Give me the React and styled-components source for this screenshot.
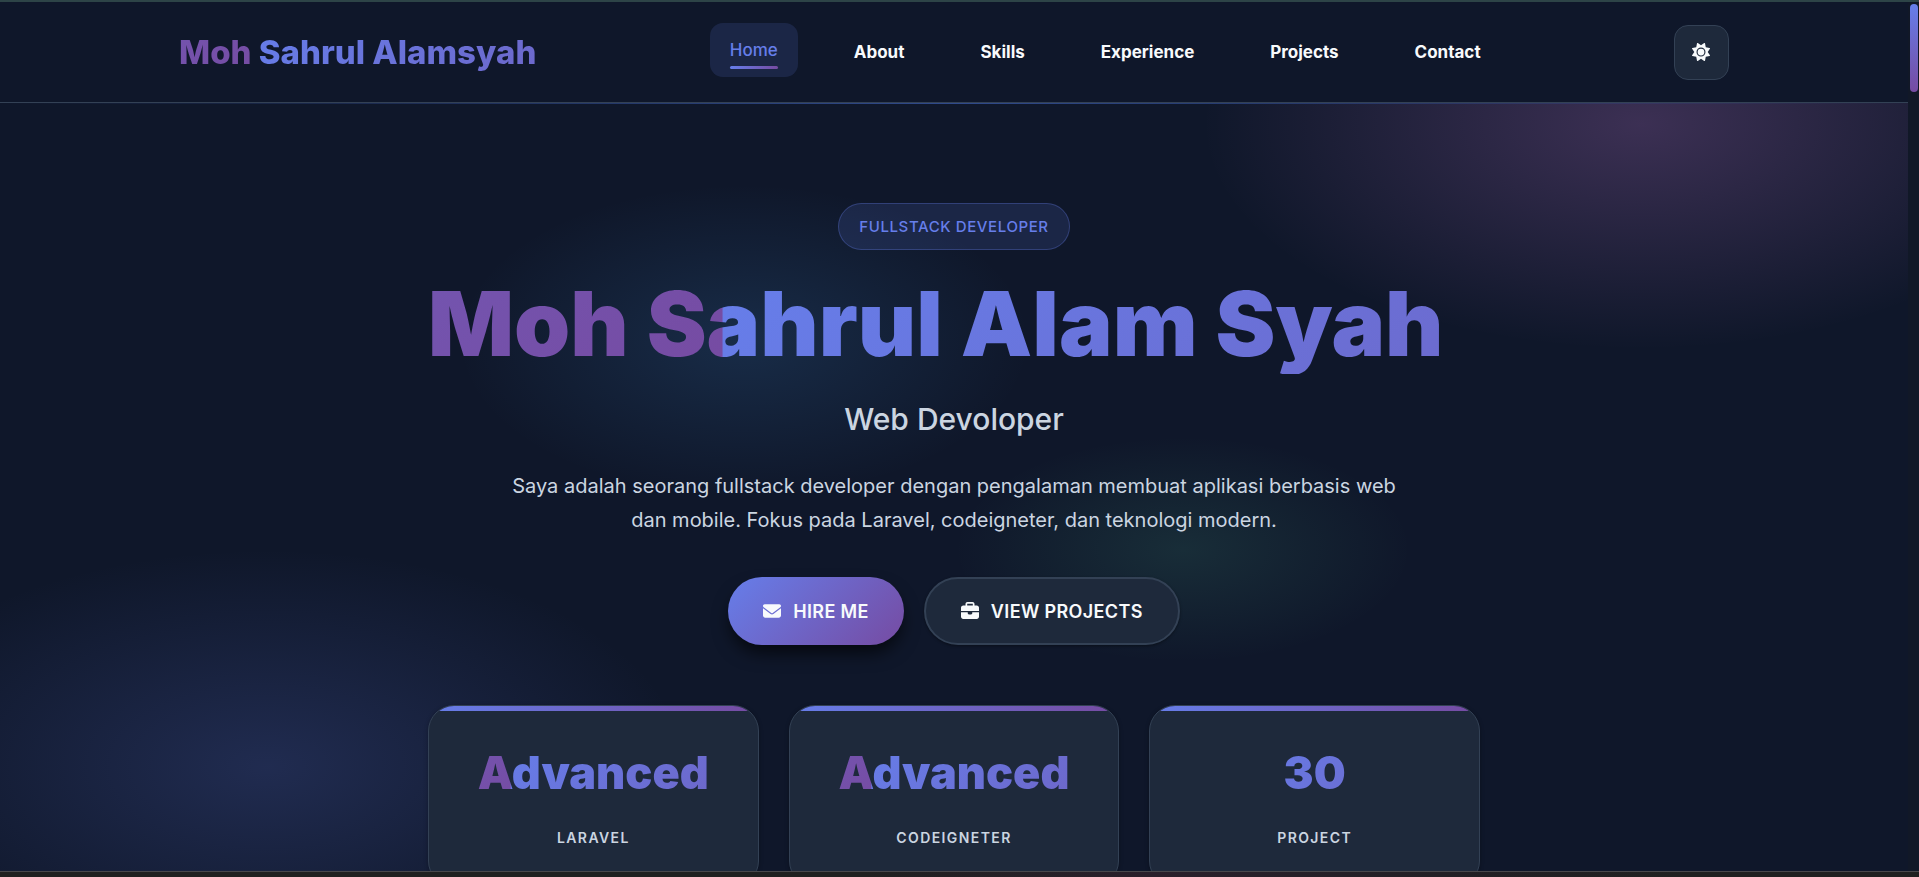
import React from "react";
import styled, { createGlobalStyle } from "styled-components";
import { FaEnvelope, FaBriefcase, FaSun } from "react-icons/fa6";

const ink = "#0f172a";
const panel = "#1e293b";
const line = "#334155";
const blue = "#667eea";
const violet = "#764ba2";
const brandGradient = `linear-gradient(135deg, ${blue} 0%, ${violet} 100%)`;

const GlobalStyle = createGlobalStyle`
  *, *::before, *::after { box-sizing: border-box; }
  body {
    margin: 0;
    background: ${ink};
    color: #f8fafc;
    font-family: Inter, "Liberation Sans", sans-serif;
    -webkit-font-smoothing: antialiased;
  }
`;

const Screen = styled.div`
  display: flex;
  flex-direction: column;
  height: 100vh;
  overflow: hidden;
`;

const TopEdge = styled.div`
  flex: none;
  height: 2px;
  background: #2d4447;
`;

const Taskbar = styled.div`
  flex: none;
  height: 6px;
  border-top: 1px solid #48474b;
  background: linear-gradient(90deg, #202020 0%, #202020 45%, #2a1f2b 60%, #221f25 75%, #202020 88%);
`;

const Viewport = styled.div`
  flex: 1;
  min-height: 0;
  display: flex;
  overflow: hidden;
`;

const Page = styled.div`
  flex: 1;
  min-width: 0;
  overflow: hidden;
  background:
    radial-gradient(ellipse 23% 26% at 86% 14%, rgba(240, 147, 251, 0.2), transparent),
    radial-gradient(ellipse 22% 25% at 14% 88%, rgba(102, 126, 234, 0.2), transparent),
    radial-gradient(ellipse 15% 18% at 39% 39%, rgba(79, 172, 254, 0.14), transparent),
    radial-gradient(ellipse 12% 13% at 62% 63%, rgba(105, 240, 180, 0.1), transparent),
    ${ink};
`;

const ScrollTrack = styled.div`
  flex: none;
  width: 11px;
  padding: 2px 1px 2px 2px;
  background: #111827;
`;

const ScrollThumb = styled.div`
  height: 88px;
  border-radius: 4px;
  background: linear-gradient(180deg, ${blue}, ${violet});
`;

const Header = styled.header`
  background: ${ink};
  border-bottom: 1px solid ${line};
`;

const HeaderInner = styled.div`
  max-width: 1550px;
  height: 100px;
  margin: 0 auto;
  display: flex;
  align-items: center;
  justify-content: space-between;
`;

const HeaderGlow = styled.div`
  height: 1px;
  background: linear-gradient(90deg, transparent, #2f4a8c, transparent);
`;

const GradientText = styled.span`
  background-image: ${brandGradient};
  background-size: 200% 100%;
  background-position: ${(p) => p.$shift} 0;
  background-clip: text;
  -webkit-background-clip: text;
  color: transparent;
`;

const Brand = styled(GradientText)`
  font-size: 33px;
  line-height: 56px;
  font-weight: 800;
  text-decoration: none;
`;

const Nav = styled.nav`
  display: flex;
  align-items: center;
  gap: 36px;
`;

const NavLink = styled.a`
  position: relative;
  padding: 14px 20px;
  border-radius: 13px;
  color: ${(p) => (p.$active ? blue : "#f8fafc")};
  background: ${(p) => (p.$active ? "rgba(102, 126, 234, 0.15)" : "transparent")};
  font-size: 17px;
  line-height: 26px;
  font-weight: ${(p) => (p.$active ? 500 : 700)};
  text-decoration: none;
  transform: ${(p) => (p.$active ? "translateY(-2px)" : "none")};

  &::after {
    content: "";
    display: ${(p) => (p.$active ? "block" : "none")};
    position: absolute;
    right: 20px;
    bottom: 8px;
    left: 20px;
    height: 3px;
    border-radius: 2px;
    background: linear-gradient(90deg, ${blue}, ${violet});
  }
`;

const ThemeButton = styled.button`
  display: grid;
  place-items: center;
  width: 55px;
  height: 55px;
  padding: 0;
  border: 1px solid ${line};
  border-radius: 14px;
  background: ${panel};
  color: #f8fafc;
  font-size: 18px;
`;

const Hero = styled.main`
  max-width: 1052px;
  margin: 0 auto;
  padding-top: 99px;
  text-align: center;
`;

const Badge = styled.p`
  width: fit-content;
  margin: 0 auto 24px;
  padding: 10px 20px;
  border: 1px solid rgba(102, 126, 234, 0.3);
  border-radius: 24px;
  background: rgba(102, 126, 234, 0.15);
  color: ${blue};
  font-size: 15px;
  line-height: 25px;
  font-weight: 500;
  letter-spacing: 0.04em;
  text-transform: uppercase;
`;

const Title = styled(GradientText)`
  display: block;
  margin: 0 0 25px;
  font-size: 90px;
  line-height: 100px;
  font-weight: 900;
  text-align: left;
  white-space: nowrap;
`;

const Role = styled.h2`
  margin: 0 0 30px;
  color: #cbd5e1;
  font-size: 30px;
  line-height: 40px;
  font-weight: 500;
`;

const Intro = styled.p`
  max-width: 900px;
  margin: 0 auto 40px;
  color: #cbd5e1;
  font-size: 20px;
  line-height: 34px;
`;

const Actions = styled.div`
  display: flex;
  justify-content: center;
  gap: 20px;
  margin-bottom: 60px;
`;

const Action = styled.a`
  display: flex;
  align-items: center;
  gap: 12px;
  height: 68px;
  padding: 0 35px;
  border: ${(p) => (p.$primary ? "0" : `2px solid ${line}`)};
  border-radius: 34px;
  background: ${(p) => (p.$primary ? brandGradient : panel)};
  box-shadow: ${(p) =>
    p.$primary ? "0 10px 18px -3px rgba(0, 0, 0, 0.7)" : "0 1px 3px rgba(0, 0, 0, 0.4)"};
  color: #f8fafc;
  font-size: 18px;
  font-weight: 600;
  letter-spacing: 0.02em;
  text-decoration: none;
  text-transform: uppercase;
`;

const Stats = styled.section`
  display: grid;
  grid-template-columns: repeat(3, 1fr);
  gap: 30px;
`;

const StatCard = styled.article`
  overflow: hidden;
  border: 1px solid ${line};
  border-radius: 26px;
  background: ${panel};
  box-shadow: 0 1px 4px rgba(0, 0, 0, 0.3);

  &::before {
    content: "";
    display: block;
    height: 5px;
    background: linear-gradient(90deg, ${blue}, ${violet});
  }
`;

const StatBody = styled.div`
  padding: 24px 35px 36px;
`;

const StatValue = styled(GradientText)`
  display: block;
  font-size: 45px;
  line-height: 76px;
  font-weight: 900;
`;

const StatLabel = styled.p`
  margin: 15px 0 0;
  color: #cbd5e1;
  font-size: 14px;
  line-height: 24px;
  font-weight: 600;
  letter-spacing: 0.1em;
  text-transform: uppercase;
`;

const links = ["Home", "About", "Skills", "Experience", "Projects", "Contact"];

const stats = [
  { value: "Advanced", label: "Laravel" },
  { value: "Advanced", label: "Codeigneter" },
  { value: "30", label: "Project" },
];

export default function App() {
  return (
    <Screen>
      <GlobalStyle />
      <TopEdge />
      <Viewport>
        <Page>
          <Header>
            <HeaderInner>
              <Brand as="a" href="#home" $shift="-21%">
                Moh Sahrul Alamsyah
              </Brand>
              <Nav>
                {links.map((name, i) => (
                  <NavLink key={name} href={`#${name.toLowerCase()}`} $active={i === 0}>
                    {name}
                  </NavLink>
                ))}
              </Nav>
              <ThemeButton type="button" aria-label="Toggle theme">
                <FaSun />
              </ThemeButton>
            </HeaderInner>
          </Header>
          <HeaderGlow />
          <Hero>
            <Badge>Fullstack Developer</Badge>
            <Title as="h1" $shift="-28%">
              Moh Sahrul Alam Syah
            </Title>
            <Role>Web Devoloper</Role>
            <Intro>
              Saya adalah seorang fullstack developer dengan pengalaman membuat aplikasi
              berbasis web dan mobile. Fokus pada Laravel, codeigneter, dan teknologi modern.
            </Intro>
            <Actions>
              <Action href="#contact" $primary>
                <FaEnvelope />
                Hire Me
              </Action>
              <Action href="#projects">
                <FaBriefcase />
                View Projects
              </Action>
            </Actions>
            <Stats>
              {stats.map((s) => (
                <StatCard key={s.label}>
                  <StatBody>
                    <StatValue $shift="-18%">{s.value}</StatValue>
                    <StatLabel>{s.label}</StatLabel>
                  </StatBody>
                </StatCard>
              ))}
            </Stats>
          </Hero>
        </Page>
        <ScrollTrack aria-hidden="true">
          <ScrollThumb />
        </ScrollTrack>
      </Viewport>
      <Taskbar />
    </Screen>
  );
}
